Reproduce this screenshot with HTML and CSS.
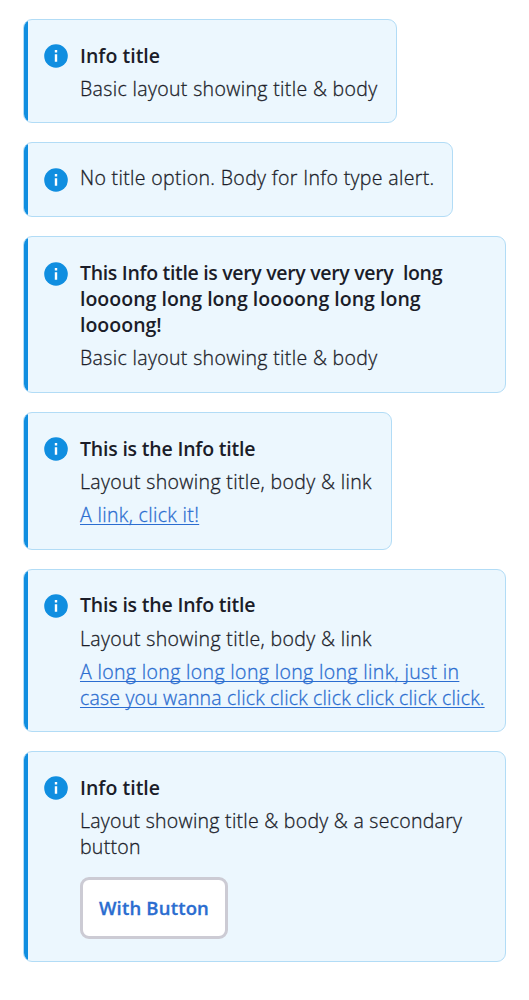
FILE: index.html
```html
<!DOCTYPE html>
<html lang="en">
<head>
<meta charset="utf-8">
<title>Info alerts</title>
<link rel="stylesheet" href="styles.css">
</head>
<body>
<svg class="sprite" aria-hidden="true"><symbol id="info" viewBox="0 0 24 24"><circle cx="12" cy="12" r="11.8" fill="#108ee0"/><path fill="#fff" d="M10.8 6h2.4v2.4h-2.4zM10.8 10.2h2.4v7.5h-2.4z"/></symbol></svg>
<main class="alerts">
<section class="alert basic"><svg class="icon"><use href="#info"/></svg><div class="content"><h2>Info title</h2><p>Basic layout showing title &amp; body</p></div></section>
<section class="alert untitled"><svg class="icon"><use href="#info"/></svg><div class="content"><p>No title option. Body for Info type alert.</p></div></section>
<section class="alert wrapped"><svg class="icon"><use href="#info"/></svg><div class="content"><h2><span class="tight">This Info title is very very very very&nbsp; long</span><br>loooong long long loooong long long<br>loooong!</h2><p>Basic layout showing title &amp; body</p></div></section>
<section class="alert linked"><svg class="icon"><use href="#info"/></svg><div class="content"><h2 class="snug">This is the Info title</h2><p>Layout showing title, body &amp; link</p><a href="#">A link, click it!</a></div></section>
<section class="alert long-link"><svg class="icon"><use href="#info"/></svg><div class="content"><h2 class="snug">This is the Info title</h2><p>Layout showing title, body &amp; link</p><a href="#">A long long long long long long link, just in<br><span class="compact">case you wanna click click click click click click.</span></a></div></section>
<section class="alert action"><svg class="icon"><use href="#info"/></svg><div class="content"><h2>Info title</h2><p class="medium">Layout showing title &amp; body &amp; a secondary<br>button</p><button class="button">With Button</button></div></section>
</main>
</body>
</html>
```
FILE: styles.css
```css
* { box-sizing: border-box; }
body { margin: 0; background: #fff; color: #1b1d29; font: 300 19.5px/26px "Open Sans", sans-serif; }
.sprite { position: absolute; width: 0; height: 0; }
.alerts { display: flex; flex-direction: column; align-items: flex-start; gap: 19.2px; padding: 19px 0 0 23.4px; }
.alert { position: relative; display: flex; gap: 11.6px; padding: 22.7px 0 0 20px; background: #ecf7fe; border: 1px solid #b2dcf6; border-radius: 9px; width: 482.3px; overflow: hidden; }
.alert::before { content: ""; position: absolute; left: -1px; top: -1px; bottom: -1px; width: 5px; background: #108ee0; }
.basic { width: 373.5px; height: 104.2px; }
.untitled { width: 429.3px; height: 74.8px; padding-top: 21.8px; }
.wrapped { height: 156.6px; }
.linked { width: 368.5px; height: 137.4px; }
.long-link { height: 163px; }
.action { height: 211.5px; }
.icon { width: 24px; height: 24px; margin-top: 1.5px; flex: none; }
.untitled .icon { margin-top: 3px; }
.content { display: flex; flex-direction: column; align-items: flex-start; gap: 7.2px; white-space: nowrap; }
h2, p { margin: 0; font-size: inherit; font-weight: inherit; }
p, a { letter-spacing: .35px; -webkit-text-stroke: .3px currentColor; }
h2 { font-weight: 600; letter-spacing: .02px; }
.tight { letter-spacing: -.32px; }
.snug { letter-spacing: -.2px; }
.compact { letter-spacing: .19px; }
.medium { letter-spacing: .27px; }
a { color: #2b6dd0; text-decoration: underline; text-decoration-thickness: 1px; text-underline-offset: 2px; text-decoration-skip-ink: none; }
.button { width: 148px; height: 62px; margin-top: 10px; padding: 0; border: 3px solid #cccbd4; border-radius: 9px; background: #fff; color: #2b6dd0; font: 600 18.5px/26px "Open Sans", sans-serif; letter-spacing: .18px; -webkit-text-stroke: .3px currentColor; }
```
